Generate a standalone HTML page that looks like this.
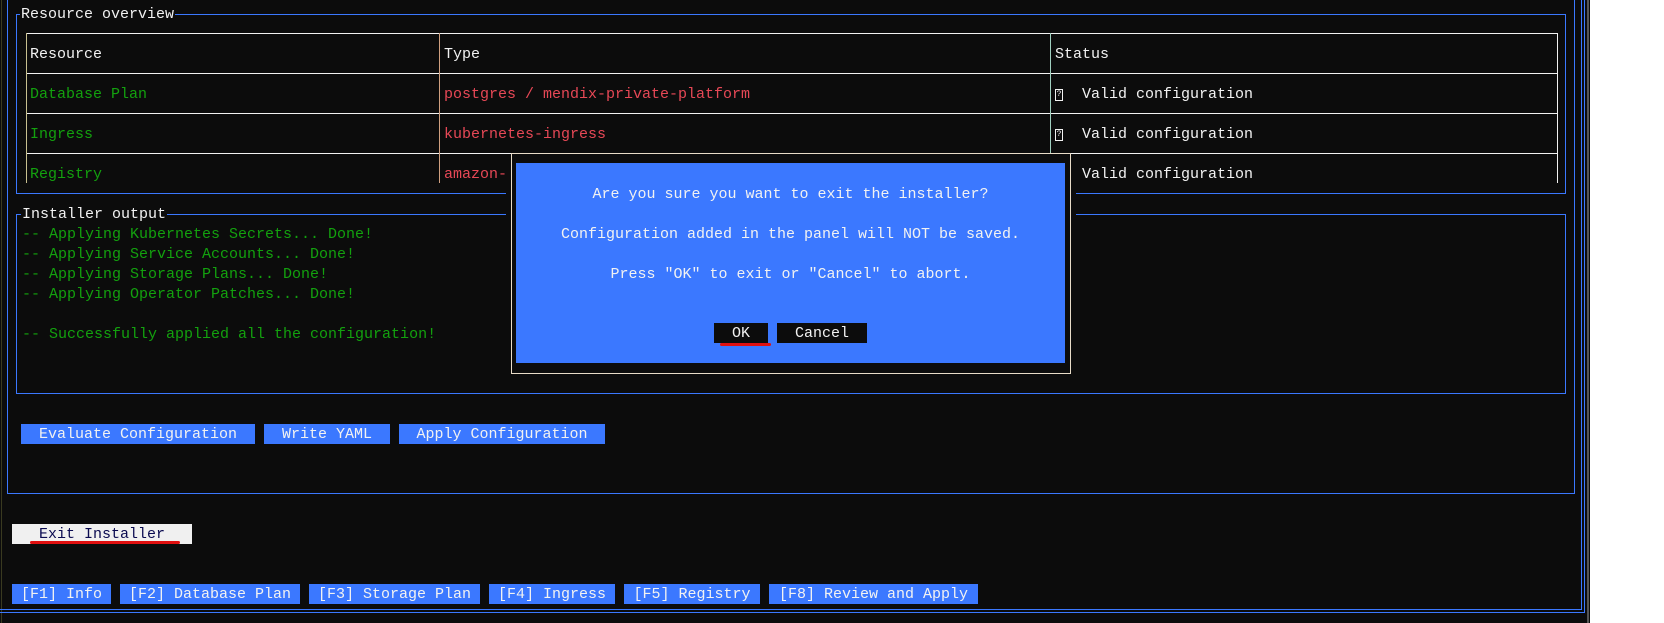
<!DOCTYPE html>
<html><head><meta charset="utf-8"><style>
*{margin:0;padding:0;box-sizing:border-box}
body{width:1664px;height:623px;background:#0c0c0c;position:relative;overflow:hidden;font-family:"Liberation Mono",monospace;font-size:15px;color:#f2f2f2}
.a{position:absolute}
.t{position:absolute;white-space:pre;line-height:20px;margin-top:2px}
.g{color:#13a10e}.r{color:#e74856}
.b{position:absolute;background:#3b78ff;color:#f2f2f2;height:20px;line-height:21px;text-align:center;white-space:pre}
.hl{position:absolute;height:1px;background:#f2f2f2}
.vl{position:absolute;width:1px}
.q{position:absolute;width:8px;height:12px;border:1px solid #f2f2f2;font-size:8px;line-height:10px;text-align:center;color:#f2f2f2}
</style></head><body>
<div class="a" style="left:1px;top:0;width:1px;height:623px;background:#3a3a20"></div>
<div class="a" style="left:1590px;top:0;width:74px;height:623px;background:#fff"></div>
<div class="a" style="left:1587px;top:0;width:2px;height:623px;background:#555"></div>
<!-- outer frames -->
<div class="a" style="left:-2px;top:-2px;width:1587px;height:615px;border:1px solid #3b78ff"></div>
<div class="a" style="left:-2px;top:-2px;width:1584px;height:612px;border:1px solid #3b78ff"></div>
<div class="a" style="left:7px;top:-2px;width:1568px;height:496px;border:1px solid #3b78ff"></div>
<!-- Resource overview panel -->
<div class="a" style="left:16px;top:14px;width:1550px;height:180px;border:1px solid #3b78ff"></div>
<div class="t" style="left:20px;top:3px;background:#0c0c0c;padding:0 1px">Resource overview</div>
<!-- table -->
<div class="hl" style="left:26px;top:33px;width:1532px"></div>
<div class="hl" style="left:26px;top:73px;width:1532px"></div>
<div class="hl" style="left:26px;top:113px;width:1532px"></div>
<div class="hl" style="left:26px;top:153px;width:1532px"></div>
<div class="vl" style="left:26px;top:33px;height:150px;background:#c8c090"></div>
<div class="vl" style="left:439px;top:33px;height:150px;background:#d0a080"></div>
<div class="vl" style="left:1050px;top:33px;height:120px;background:#a0d0c0"></div>
<div class="vl" style="left:1557px;top:33px;height:150px;background:#f2f2f2"></div>
<div class="t" style="left:30px;top:43px">Resource</div>
<div class="t" style="left:444px;top:43px">Type</div>
<div class="t" style="left:1055px;top:43px">Status</div>
<div class="t g" style="left:30px;top:83px">Database Plan</div>
<div class="t r" style="left:444px;top:83px">postgres / mendix-private-platform</div>
<div class="q" style="left:1055px;top:89px">?</div>
<div class="t" style="left:1082px;top:83px">Valid configuration</div>
<div class="t g" style="left:30px;top:123px">Ingress</div>
<div class="t r" style="left:444px;top:123px">kubernetes-ingress</div>
<div class="q" style="left:1055px;top:129px">?</div>
<div class="t" style="left:1082px;top:123px">Valid configuration</div>
<div class="t g" style="left:30px;top:163px">Registry</div>
<div class="t r" style="left:444px;top:163px">amazon-ecr</div>
<div class="t" style="left:1082px;top:163px">Valid configuration</div>
<!-- Installer output -->
<div class="a" style="left:16px;top:214px;width:1550px;height:180px;border:1px solid #3b78ff"></div>
<div class="t" style="left:21px;top:203px;background:#0c0c0c;padding:0 1px">Installer output</div>
<div class="t g" style="left:22px;top:223px">-- Applying Kubernetes Secrets... Done!
-- Applying Service Accounts... Done!
-- Applying Storage Plans... Done!
-- Applying Operator Patches... Done!

-- Successfully applied all the configuration!</div>
<!-- action buttons -->
<div class="b" style="left:21px;top:424px;width:234px">Evaluate Configuration</div>
<div class="b" style="left:264px;top:424px;width:126px">Write YAML</div>
<div class="b" style="left:399px;top:424px;width:206px">Apply Configuration</div>
<!-- exit -->
<div class="b" style="left:12px;top:524px;width:180px;background:#f0f0f0;color:#0a0a50">Exit Installer</div>
<div class="a" style="left:30px;top:541px;width:150px;height:3px;background:#e01010;border-radius:2px"></div>
<!-- F keys -->
<div class="b" style="left:12px;top:584px;width:99px">[F1] Info</div>
<div class="b" style="left:120px;top:584px;width:180px">[F2] Database Plan</div>
<div class="b" style="left:309px;top:584px;width:171px">[F3] Storage Plan</div>
<div class="b" style="left:489px;top:584px;width:126px">[F4] Ingress</div>
<div class="b" style="left:624px;top:584px;width:136px">[F5] Registry</div>
<div class="b" style="left:769px;top:584px;width:209px">[F8] Review and Apply</div>
<!-- dialog -->
<div class="a" style="left:506px;top:154px;width:570px;height:220px;background:#0c0c0c"></div>
<div class="a" style="left:511px;top:153px;width:560px;height:221px;border:1px solid #e8dcc8"></div>
<div class="a" style="left:516px;top:163px;width:549px;height:200px;background:#3b78ff"></div>
<div class="t" style="left:516px;top:183px;width:549px;text-align:center">Are you sure you want to exit the installer?</div>
<div class="t" style="left:516px;top:223px;width:549px;text-align:center">Configuration added in the panel will NOT be saved.</div>
<div class="t" style="left:516px;top:263px;width:549px;text-align:center">Press "OK" to exit or "Cancel" to abort.</div>
<div class="b" style="left:714px;top:323px;width:54px;background:#0c0c0c">OK</div>
<div class="b" style="left:777px;top:323px;width:90px;background:#0c0c0c">Cancel</div>
<div class="a" style="left:720px;top:343px;width:51px;height:3px;background:#e01010;border-radius:2px"></div>
</body></html>
